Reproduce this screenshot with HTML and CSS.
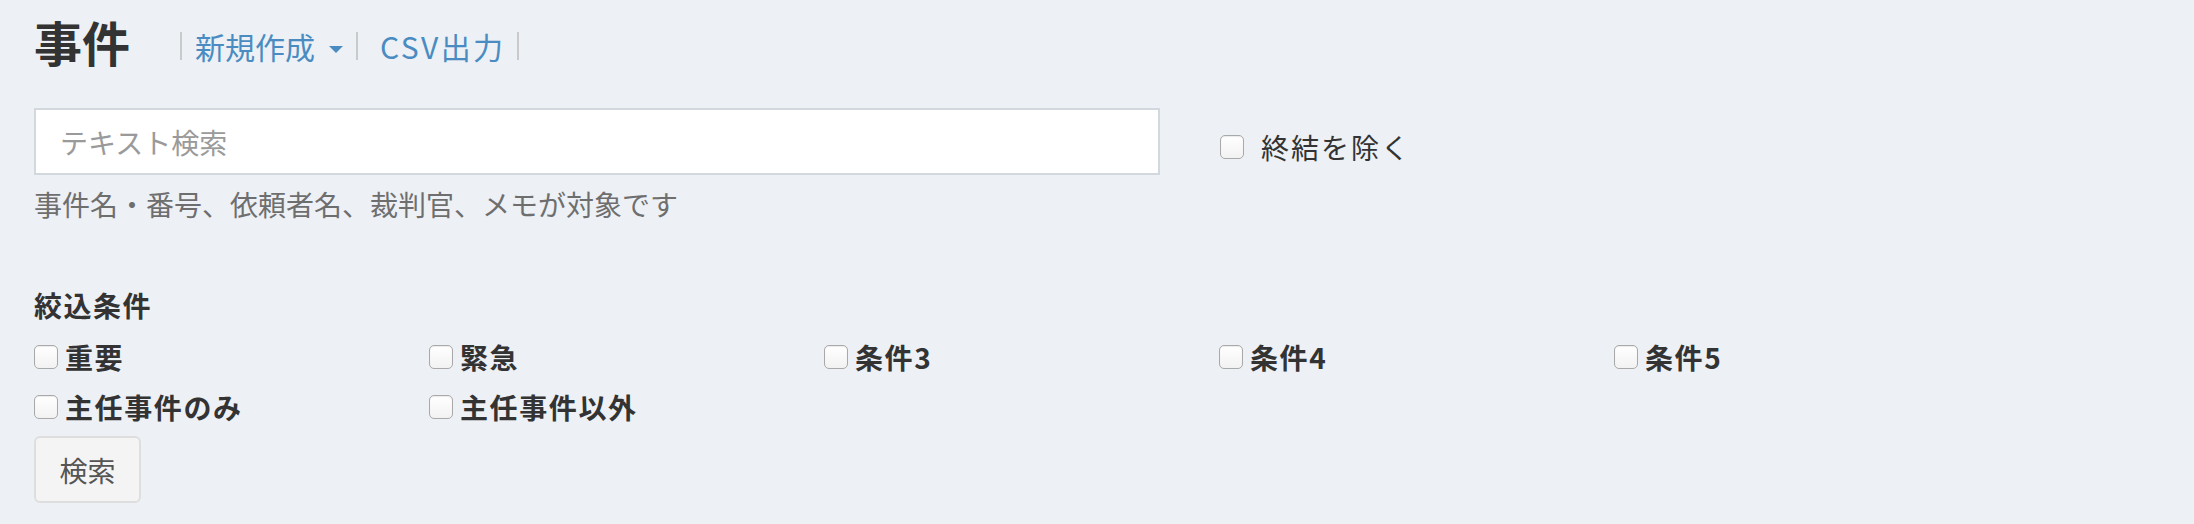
FILE: index.html
```html
<!DOCTYPE html>
<html lang="ja">
<head>
<meta charset="utf-8">
<title>事件</title>
<link rel="stylesheet" href="styles.css">
</head>
<body>
<div class="page">
  <header class="head">
    <h1 class="title">事件</h1>
    <nav class="links">
      <span class="sep"></span>
      <a class="link" href="#">新規作成<span class="caret"></span></a>
      <span class="sep"></span>
      <a class="link link-csv" href="#">CSV出力</a>
      <span class="sep"></span>
    </nav>
  </header>

  <div class="search-row">
    <div class="search-col">
      <input class="text-input" type="text" placeholder="テキスト検索">
      <p class="hint">事件名・番号、依頼者名、裁判官、メモが対象です</p>
    </div>
    <label class="closed"><input class="cb" type="checkbox"><span class="closed-text">終結を除く</span></label>
  </div>

  <section class="filters">
    <div class="filter-title">絞込条件</div>
    <div class="filter-grid">
      <label class="opt"><input class="cb" type="checkbox"><span>重要</span></label>
      <label class="opt"><input class="cb" type="checkbox"><span>緊急</span></label>
      <label class="opt"><input class="cb" type="checkbox"><span>条件3</span></label>
      <label class="opt"><input class="cb" type="checkbox"><span>条件4</span></label>
      <label class="opt"><input class="cb" type="checkbox"><span>条件5</span></label>
      <label class="opt"><input class="cb" type="checkbox"><span>主任事件のみ</span></label>
      <label class="opt"><input class="cb" type="checkbox"><span>主任事件以外</span></label>
    </div>
    <button class="btn" type="button">検索</button>
  </section>
</div>
</body>
</html>
```

FILE: styles.css
```css
html, body {
  margin: 0;
  padding: 0;
  background: #edf0f5;
}
body {
  font-family: "Noto Sans CJK JP", "Noto Sans", sans-serif;
  color: #333;
  font-size: 28px;
}
.page {
  padding: 0 0 0 34px;
}
.head {
  display: flex;
  align-items: center;
  height: 88px;
}
.title {
  margin: 0;
  font-size: 48px;
  line-height: 48px;
  font-weight: 700;
  color: #333;
  margin-top: -6px;
}
.links {
  display: flex;
  align-items: center;
  margin-left: 50px;
  margin-top: 4px;
}
.sep {
  width: 2px;
  height: 28px;
  background: #cacaca;
}
.link {
  color: #4a8cc1;
  text-decoration: none;
  font-size: 30px;
  line-height: 40px;
  padding: 0 13px;
  display: flex;
  align-items: center;
}
.link-csv {
  padding: 0 12px 0 22px;
  letter-spacing: 2.4px;
}
.caret {
  width: 0;
  height: 0;
  border-top: 7px solid #4a8cc1;
  border-left: 7px solid transparent;
  border-right: 7px solid transparent;
  margin-left: 14px;
  margin-top: 6px;
}
.search-row {
  display: flex;
  align-items: flex-start;
  margin-top: 20px;
}
.search-col {
  width: 1126px;
}
.text-input {
  display: block;
  box-sizing: border-box;
  width: 1126px;
  height: 67px;
  border: 2px solid #d3d7de;
  background: #fff;
  padding: 0 0 0 24px;
  margin: 0;
  font-family: inherit;
  font-size: 28px;
  color: #333;
  outline: none;
}
.text-input::placeholder {
  color: #9a9a9a;
}
.hint {
  margin: 9px 0 0 0;
  line-height: 40px;
  color: #6e6e6e;
  font-size: 28px;
}
.closed {
  display: flex;
  align-items: center;
  margin-left: 60px;
  margin-top: 19px;
  height: 40px;
}
.closed-text {
  margin-left: 17px;
  letter-spacing: 2px;
  color: #333;
}
.cb {
  appearance: none;
  -webkit-appearance: none;
  box-sizing: border-box;
  width: 24px;
  height: 24px;
  margin: 0;
  border: 1px solid #a9a9a9;
  border-radius: 5px;
  background: linear-gradient(#ffffff, #f2f2f2);
  box-shadow: inset 0 1px 1px rgba(0,0,0,0.08);
  flex: none;
}
.filters {
  margin-top: 61px;
}
.filter-title {
  font-weight: 700;
  line-height: 40px;
  height: 40px;
  letter-spacing: 1.5px;
}
.filter-grid {
  display: grid;
  grid-template-columns: repeat(5, 395px);
  grid-auto-rows: 50px;
  margin-top: 7px;
}
.opt {
  display: flex;
  align-items: center;
  font-weight: 700;
  color: #333;
}
.opt span {
  margin-left: 7px;
  letter-spacing: 1.6px;
}
.btn {
  display: block;
  margin-top: 4px;
  width: 107px;
  height: 67px;
  box-sizing: border-box;
  background: #f4f4f4;
  border: 2px solid #dedede;
  border-radius: 6px;
  font-family: inherit;
  font-size: 28px;
  color: #555;
  padding: 0;
}
```
